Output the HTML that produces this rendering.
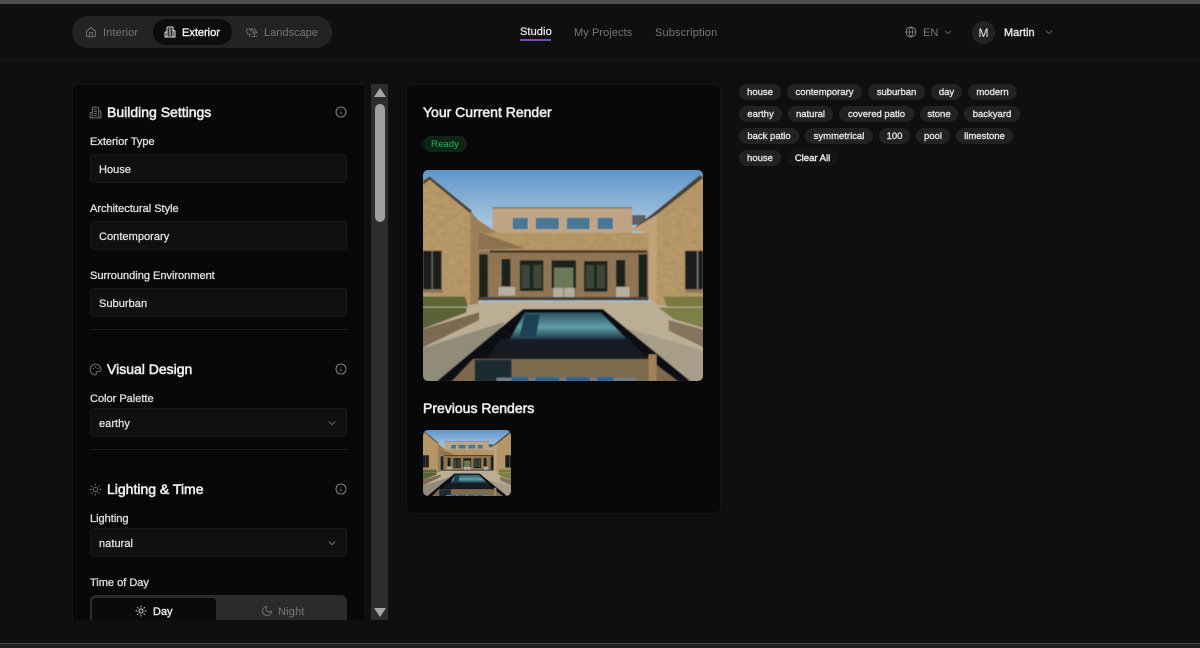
<!DOCTYPE html>
<html lang="en"><head><meta charset="utf-8"><title>Studio</title>
<style>
*{box-sizing:border-box;margin:0;padding:0}
html,body{width:1200px;height:648px;overflow:hidden;background:#0f0f10}
body{position:relative;font-family:"Liberation Sans",sans-serif;color:#f2f2f2}
.a{position:absolute;white-space:nowrap}
.t{position:absolute;white-space:nowrap;line-height:14px;height:14px}
.h{font-size:14px;font-weight:400;-webkit-text-stroke:.55px #f0f0f0;color:#f0f0f0;line-height:18px;height:18px}
.l{font-size:11px;font-weight:400;-webkit-text-stroke:.35px #dcdcdc;color:#dcdcdc}
.f{position:absolute;left:90px;width:257px;height:29px;background:#101012;border:1px solid #19191b;border-radius:4px;font-size:11px;letter-spacing:.05px;line-height:30px;padding-left:8px;color:#e6e6e6;-webkit-text-stroke:.25px #e6e6e6}
.d{position:absolute;left:90px;width:258px;height:1px;background:#1a1a1c}
.tag{position:absolute;height:16px;border-radius:8px;background:#222224;font-size:9.5px;-webkit-text-stroke:.4px #dedede;color:#dedede;text-align:center;line-height:17px;white-space:nowrap}
svg.i{position:absolute;fill:none;stroke:currentColor;stroke-width:2;stroke-linecap:round;stroke-linejoin:round}
</style></head><body>
<svg width="0" height="0" style="position:absolute">
<defs>
<filter id="st" x="0" y="0" width="100%" height="100%"><feTurbulence type="fractalNoise" baseFrequency=".05 .11" numOctaves="2" seed="3" result="n"/><feColorMatrix in="n" type="matrix" values="0 0 0 0 .3 0 0 0 0 .22 0 0 0 0 .12 1 0 0 0 -.38" result="d"/><feComposite in="d" in2="SourceGraphic" operator="in" result="d2"/><feMerge><feMergeNode in="SourceGraphic"/><feMergeNode in="d2"/></feMerge></filter>
<filter id="bl" x="0" y="0" width="100%" height="100%"><feGaussianBlur stdDeviation="1.3"/></filter>
<linearGradient id="sky" x1="0" y1="0" x2="0" y2="1"><stop offset="0" stop-color="#5a93c9"/><stop offset=".4" stop-color="#a6c5de"/></linearGradient>
<linearGradient id="wat" x1="0" y1="0" x2="0" y2="1"><stop offset="0" stop-color="#2b525d"/><stop offset=".55" stop-color="#5f9ea9"/><stop offset="1" stop-color="#1d3b44"/></linearGradient>
<symbol id="house" viewBox="40 15 838 633" preserveAspectRatio="none">
<g filter="url(#bl)">
<rect x="30" y="5" width="860" height="420" fill="url(#sky)"/>
<rect x="30" y="410" width="860" height="250" fill="#bcae95"/>
<rect x="248" y="128" width="418" height="85" fill="#c0a382"/>
<rect x="248" y="127" width="418" height="3" fill="#6e5c4a"/>
<rect x="666" y="150" width="40" height="30" fill="#5b6168"/>
<g fill="#4a7897" stroke="#d3bc9b" stroke-width="2"><rect x="307" y="157" width="48" height="37"/><rect x="376" y="157" width="72" height="37"/><rect x="469" y="157" width="71" height="37"/><rect x="561" y="157" width="49" height="37"/></g>
<rect x="205" y="204" width="510" height="56" fill="#b89866" filter="url(#st)"/>
<path d="M205 200L345 250 205 255Z" fill="#8c7350"/>
<rect x="205" y="258" width="510" height="145" fill="#8f7353" filter="url(#st)"/>
<rect x="240" y="256" width="470" height="7" fill="#3f3124"/>
<g fill="#1d211e"><rect x="275" y="282" width="27" height="82"/><rect x="330" y="286" width="70" height="92"/><rect x="425" y="286" width="73" height="84"/><rect x="522" y="288" width="70" height="92"/><rect x="618" y="285" width="27" height="80"/><rect x="208" y="268" width="26" height="130"/><rect x="685" y="268" width="26" height="130"/></g>
<g fill="#3b463b"><rect x="335" y="300" width="25" height="70"/><rect x="370" y="300" width="25" height="70"/><rect x="527" y="300" width="25" height="70"/><rect x="560" y="300" width="25" height="70"/></g>
<rect x="432" y="308" width="58" height="60" fill="#6a7a55"/>
<g fill="#b5aea0"><rect x="266" y="366" width="50" height="26"/><rect x="430" y="368" width="30" height="34"/><rect x="463" y="368" width="30" height="34"/><rect x="618" y="366" width="40" height="34"/></g>
<rect x="205" y="396" width="510" height="10" fill="#4e4334"/>
<path d="M30 50L60 35 185 140 185 420H30Z" fill="#b99a68" filter="url(#st)"/>
<path d="M182 138L205 165 262 203 205 205 205 415 182 420Z" fill="#9f7f55" filter="url(#st)"/>
<path d="M890 30L868 32 738 142 738 420H890Z" fill="#b99a68" filter="url(#st)"/>
<path d="M737 145L660 195 715 205 715 400 738 420Z" fill="#c2a377"/>
<path d="M40 48L60 34 185 136 183 146 60 44 40 58ZM868 31L880 38 738 150 668 192 735 140Z" fill="#4a4036"/>
<rect x="40" y="258" width="55" height="115" fill="#1a1e1a" stroke="#4b4234" stroke-width="2"/>
<rect x="66" y="258" width="3" height="115" fill="#7f7f78"/>
<rect x="825" y="258" width="53" height="115" fill="#1a1e1a" stroke="#4b4234" stroke-width="2"/>
<rect x="860" y="258" width="4" height="115" fill="#7f7f78"/>
<rect x="40" y="375" width="60" height="8" fill="#8d7654"/><rect x="828" y="375" width="50" height="8" fill="#8d7654"/>
<path d="M30 395H165L175 425H30Z" fill="#5e6634"/>
<path d="M760 395H890V425H770Z" fill="#7a7a41"/>
<path d="M30 428H170V442L30 495Z" fill="#5a6337"/>
<path d="M745 428H890V492L790 462Z" fill="#7d7f49"/>
<path d="M30 495L208 442V465L30 552Z" fill="#7b6a53"/>
<path d="M775 465L890 497V552L775 497Z" fill="#85745b"/>
<path d="M30 552L285 470 150 660H30Z" fill="#918c7a"/>
<path d="M650 490L890 560V660H850Z" fill="#a89d88"/>
<path d="M80 650L340 432H578L842 650Z" fill="#0a0f12"/>
<path d="M345 443H572L650 522H300Z" fill="url(#wat)"/>
<path d="M328 515L345 448H390L378 515Z" fill="#1a3f54"/>
<path d="M230 580L272 522H655L712 580Z" fill="#121c20"/>
<path d="M125 650L190 582H715L805 650Z" fill="#7c6a4d"/>
<rect x="195" y="584" width="110" height="66" fill="#1f2b30"/>
<rect x="715" y="568" width="24" height="82" fill="#a08256"/>
<path d="M260 638H680V650H260Z" fill="#6f7d86"/>
<path d="M305 636h50v14h-50zM376 636h72v14h-72zM469 636h71v14h-71zM561 636h49v14h-49z" fill="#2d6590"/>
</g>
</symbol>
</defs>
</svg>

<div class="a" style="left:0;top:0;width:1200px;height:4px;background:#4e4e4e"></div>
<div class="a" style="left:0;top:643px;width:1200px;height:5px;background:#212121;border-top:1px solid #444"></div>
<div class="a" style="left:0;top:60px;width:1200px;height:1px;background:#1b1b1d"></div>

<!-- mode pill -->
<div class="a" style="left:72px;top:16px;width:260px;height:32px;border-radius:16px;background:#232325"></div>
<div class="a" style="left:153px;top:19px;width:79px;height:26px;border-radius:13px;background:#0c0c0d"></div>
<svg class="i" style="left:85px;top:26px;color:#7d7d7f;stroke-width:1.7" width="12" height="12" viewBox="0 0 24 24"><path d="M3 10.500 12 3l9 7.500V20a1.500 1.500 0 0 1-1.500 1.500h-15A1.500 1.500 0 0 1 3 20z"/><path d="M9 21.500V13h6v8.500"/></svg>
<div class="t" style="left:103px;top:26px;font-size:11px;color:#77777a;letter-spacing:.12px">Interior</div>
<svg class="i" style="left:164px;top:26px;color:#e8e8e8;stroke-width:2" width="12" height="12" viewBox="0 0 24 24"><path d="M6 22V4a2 2 0 0 1 2-2h8a2 2 0 0 1 2 2v18z"/><path d="M6 12H4a2 2 0 0 0-2 2v8h4M18 9h2a2 2 0 0 1 2 2v11h-4M10 6h4M10 10h4M10 14h4M10 18h4"/></svg>
<div class="t" style="left:182px;top:26px;font-size:11px;color:#f0f0f0;-webkit-text-stroke:.4px #f0f0f0">Exterior</div>
<svg class="i" style="left:246px;top:26px;color:#77777a;stroke-width:1.7" width="12" height="12" viewBox="0 0 24 24"><path d="M10 10a4.500 4.500 0 1 0-7 3.700V16h7"/><path d="M7 16v5M17 14l-5-9-3 5M13 14h9l-5-9M17 14v7M11 21h11"/></svg>
<div class="t" style="left:264px;top:26px;font-size:11px;color:#77777a">Landscape</div>

<!-- nav -->
<div class="t" style="left:520px;top:25px;font-size:11px;color:#ededed;letter-spacing:.1px;-webkit-text-stroke:.2px #ededed">Studio</div>
<div class="a" style="left:520px;top:39px;width:31px;height:2px;background:#7b45b5"></div>
<div class="t" style="left:574px;top:26px;font-size:11px;color:#77777a;letter-spacing:.08px">My Projects</div>
<div class="t" style="left:655px;top:26px;font-size:11px;color:#77777a;letter-spacing:.15px">Subscription</div>
<svg class="i" style="left:905px;top:26px;color:#8a8a8c;stroke-width:1.6" width="12" height="12" viewBox="0 0 24 24"><circle cx="12" cy="12" r="10"/><path d="M2 12h20M12 2a15 15 0 0 1 0 20 15 15 0 0 1 0-20"/></svg>
<div class="t" style="left:923px;top:26px;font-size:11px;color:#77777a;letter-spacing:.1px">EN</div>
<svg class="i" style="left:943px;top:27px;color:#77777a;stroke-width:1.8" width="10" height="10" viewBox="0 0 24 24"><path d="m5 9 7 7 7-7"/></svg>
<div class="a" style="left:972px;top:21px;width:23px;height:23px;border-radius:50%;background:#232325;text-align:center;line-height:24px;font-size:12px;color:#ececec">M</div>
<div class="t" style="left:1004px;top:26px;font-size:11px;color:#e6e6e6;-webkit-text-stroke:.4px #e6e6e6">Martin</div>
<svg class="i" style="left:1044px;top:27px;color:#77777a;stroke-width:1.8" width="10" height="10" viewBox="0 0 24 24"><path d="m5 9 7 7 7-7"/></svg>

<!-- left panel -->
<div class="a" style="left:72px;top:84px;width:294px;height:536px;background:#08080a;border:1px solid #151517;border-bottom:0;border-radius:6px 6px 0 0"></div>
<div class="a" style="left:371px;top:84px;width:17px;height:536px;background:#2d2d2e"></div>
<div class="a" style="left:375px;top:104px;width:10px;height:118px;border-radius:5px;background:#9f9f9f"></div>
<div class="a" style="left:374px;top:88px;width:0;height:0;border-left:6px solid transparent;border-right:6px solid transparent;border-bottom:9px solid #a6a6a6"></div>
<div class="a" style="left:374px;top:608px;width:0;height:0;border-left:6px solid transparent;border-right:6px solid transparent;border-top:9px solid #a6a6a6"></div>

<svg class="i" style="left:89px;top:106px;color:#77777a;stroke-width:1.7" width="13" height="13" viewBox="0 0 24 24"><path d="M6 22V4a2 2 0 0 1 2-2h8a2 2 0 0 1 2 2v18z"/><path d="M6 12H4a2 2 0 0 0-2 2v8h4M18 9h2a2 2 0 0 1 2 2v11h-4M10 6h4M10 10h4M10 14h4M10 18h4"/></svg>
<div class="t h" style="left:107px;top:103px">Building Settings</div>
<svg class="i" style="left:335px;top:106px;color:#9a9a9c;stroke-width:1.7" width="12" height="12" viewBox="0 0 24 24"><circle cx="12" cy="12" r="10"/><path d="M12 16v-4M12 8h.01"/></svg>
<div class="t l" style="left:90px;top:135px">Exterior Type</div>
<div class="f" style="top:154px">House</div>
<div class="t l" style="left:90px;top:202px">Architectural Style</div>
<div class="f" style="top:221px">Contemporary</div>
<div class="t l" style="left:90px;top:269px">Surrounding Environment</div>
<div class="f" style="top:288px">Suburban</div>
<div class="d" style="top:329px"></div>

<svg class="i" style="left:89px;top:363px;color:#77777a;stroke-width:1.7" width="13" height="13" viewBox="0 0 24 24"><path d="M12 22a10 10 0 1 1 10-10c0 3-2.500 4-4.500 4H15a2 2 0 0 0-1.500 3.300c.6.8.2 2.700-1.500 2.700z"/><circle cx="8" cy="10" r=".6"/><circle cx="12" cy="7" r=".6"/><circle cx="16.500" cy="10" r=".6"/></svg>
<div class="t h" style="left:107px;top:360px">Visual Design</div>
<svg class="i" style="left:335px;top:363px;color:#9a9a9c;stroke-width:1.7" width="12" height="12" viewBox="0 0 24 24"><circle cx="12" cy="12" r="10"/><path d="M12 16v-4M12 8h.01"/></svg>
<div class="t l" style="left:90px;top:392px">Color Palette</div>
<div class="f" style="top:408px">earthy</div>
<svg class="i" style="left:327px;top:418px;color:#8a8a8c;stroke-width:1.8" width="10" height="10" viewBox="0 0 24 24"><path d="m5 9 7 7 7-7"/></svg>
<div class="d" style="top:449px"></div>

<svg class="i" style="left:89px;top:483px;color:#77777a;stroke-width:1.7" width="13" height="13" viewBox="0 0 24 24"><circle cx="12" cy="12" r="4"/><path d="M12 2v2M12 20v2M4.900 4.900l1.400 1.400M17.700 17.700l1.400 1.400M2 12h2M20 12h2M6.300 17.700l-1.400 1.400M19.100 4.900l-1.400 1.400"/></svg>
<div class="t h" style="left:107px;top:480px">Lighting &amp; Time</div>
<svg class="i" style="left:335px;top:483px;color:#9a9a9c;stroke-width:1.7" width="12" height="12" viewBox="0 0 24 24"><circle cx="12" cy="12" r="10"/><path d="M12 16v-4M12 8h.01"/></svg>
<div class="t l" style="left:90px;top:512px">Lighting</div>
<div class="f" style="top:528px">natural</div>
<svg class="i" style="left:327px;top:538px;color:#9a9a9c;stroke-width:1.8" width="10" height="10" viewBox="0 0 24 24"><path d="m5 9 7 7 7-7"/></svg>
<div class="t l" style="left:90px;top:576px">Time of Day</div>
<div class="a" style="left:90px;top:595px;width:257px;height:25px;background:#2b2b2d;border-radius:6px 6px 0 0"></div>
<div class="a" style="left:92px;top:598px;width:124px;height:22px;background:#0a0a0c;border-radius:4px 4px 0 0"></div>
<svg class="i" style="left:135px;top:605px;color:#e6e6e6;stroke-width:1.8" width="12" height="12" viewBox="0 0 24 24"><circle cx="12" cy="12" r="4"/><path d="M12 2v2M12 20v2M4.900 4.900l1.400 1.400M17.700 17.700l1.400 1.400M2 12h2M20 12h2M6.300 17.700l-1.400 1.400M19.100 4.900l-1.400 1.400"/></svg>
<div class="t" style="left:153px;top:605px;font-size:11px;color:#e6e6e6;-webkit-text-stroke:.4px #e6e6e6">Day</div>
<svg class="i" style="left:261px;top:605px;color:#77777a;stroke-width:1.8" width="12" height="12" viewBox="0 0 24 24"><path d="M12 3a6 6 0 0 0 9 9 9 9 0 1 1-9-9z"/></svg>
<div class="t" style="left:278px;top:605px;font-size:11px;color:#77777a;letter-spacing:.2px">Night</div>
<div class="a" style="left:0;top:620px;width:1200px;height:23px;background:#0f0f10"></div>

<!-- center panel -->
<div class="a" style="left:406px;top:84px;width:315px;height:430px;background:#08080a;border:1px solid #151517;border-radius:6px"></div>
<div class="t h" style="left:423px;top:103px">Your Current Render</div>
<div class="a" style="left:423px;top:136px;width:44px;height:16px;border-radius:8px;background:#0e2417;color:#22b455;font-size:9.5px;text-align:center;line-height:17px;letter-spacing:.1px">Ready</div>
<svg class="a" style="left:423px;top:170px;border-radius:5px" width="280" height="211"><use href="#house" width="280" height="211"/></svg>
<div class="t h" style="left:423px;top:399px">Previous Renders</div>
<svg class="a" style="left:423px;top:430px;border-radius:5px" width="88" height="66"><use href="#house" width="88" height="66"/></svg>

<!-- tags -->
<div class="tag" style="left:739px;top:84px;width:42px">house</div>
<div class="tag" style="left:787px;top:84px;width:75px">contemporary</div>
<div class="tag" style="left:868px;top:84px;width:57px">suburban</div>
<div class="tag" style="left:931px;top:84px;width:31px">day</div>
<div class="tag" style="left:968px;top:84px;width:49px">modern</div>
<div class="tag" style="left:739px;top:106px;width:43px">earthy</div>
<div class="tag" style="left:788px;top:106px;width:45px">natural</div>
<div class="tag" style="left:839px;top:106px;width:75px">covered patio</div>
<div class="tag" style="left:920px;top:106px;width:38px">stone</div>
<div class="tag" style="left:964px;top:106px;width:56px">backyard</div>
<div class="tag" style="left:739px;top:128px;width:60px">back patio</div>
<div class="tag" style="left:805px;top:128px;width:68px">symmetrical</div>
<div class="tag" style="left:879px;top:128px;width:31px">100</div>
<div class="tag" style="left:916px;top:128px;width:34px">pool</div>
<div class="tag" style="left:956px;top:128px;width:57px">limestone</div>
<div class="tag" style="left:739px;top:150px;width:42px">house</div>
<div class="tag" style="left:787px;top:150px;width:51px;background:#141415;color:#ececec;-webkit-text-stroke:.4px #ececec">Clear All</div>
</body></html>
